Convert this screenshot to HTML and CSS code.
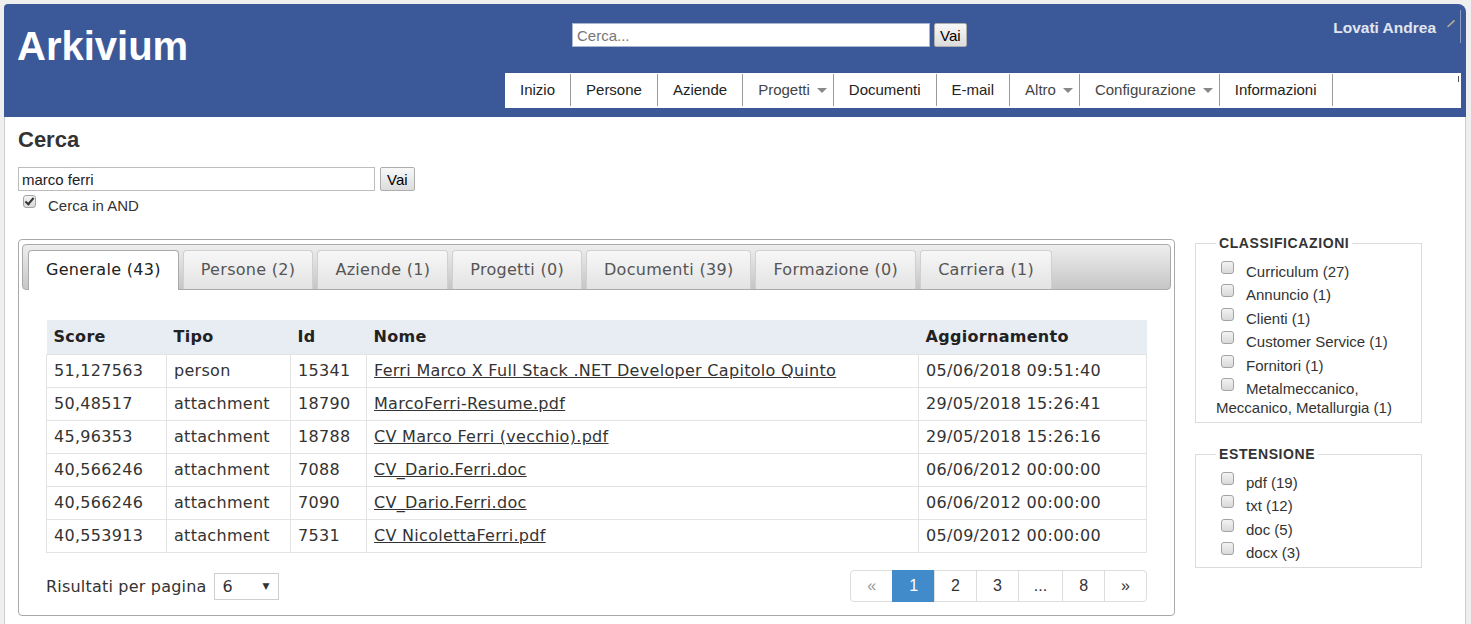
FILE: index.html
```html
<!DOCTYPE html>
<html lang="it">
<head>
<meta charset="utf-8">
<title>Arkivium - Cerca</title>
<link rel="stylesheet" href="styles.css">
</head>
<body>
<div class="page">
  <header class="top">
    <div class="toprow">
      <div class="logo">Arkivium</div>
      <form class="hsearch">
        <input class="hinput" type="text" placeholder="Cerca...">
        <button class="btn" type="button">Vai</button>
      </form>
      <div class="user">
        <span class="uname">Lovati Andrea</span>
        <svg class="uicon" width="8" height="7" viewBox="0 0 8 7"><path d="M1 6.5 L7 0.8" stroke="#b7b08e" stroke-width="1.6" stroke-linecap="round"/></svg>
      </div>
    </div>
    <nav class="menu">
      <a class="mi">Inizio</a>
      <a class="mi">Persone</a>
      <a class="mi">Aziende</a>
      <a class="mi dd">Progetti<span class="caret"></span></a>
      <a class="mi">Documenti</a>
      <a class="mi">E-mail</a>
      <a class="mi dd">Altro<span class="caret"></span></a>
      <a class="mi dd">Configurazione<span class="caret"></span></a>
      <a class="mi">Informazioni</a>
      <span class="mfill"><span class="tick"></span></span>
    </nav>
  </header>

  <main class="content">
    <h1 class="title">Cerca</h1>
    <form class="search">
      <input class="sinput" type="text" value="marco ferri">
      <button class="btn" type="button">Vai</button>
    </form>
    <label class="chk"><input class="cb" type="checkbox" checked>Cerca in AND</label>

    <div class="row">
      <section class="panel">
        <div class="tabbar">
          <div class="tab active">Generale (43)</div>
          <div class="tab">Persone (2)</div>
          <div class="tab">Aziende (1)</div>
          <div class="tab">Progetti (0)</div>
          <div class="tab">Documenti (39)</div>
          <div class="tab">Formazione (0)</div>
          <div class="tab">Carriera (1)</div>
        </div>
        <div class="tabbody">
          <table class="results">
            <thead>
              <tr>
                <th class="c-score">Score</th>
                <th class="c-tipo">Tipo</th>
                <th class="c-id">Id</th>
                <th class="c-nome">Nome</th>
                <th class="c-agg">Aggiornamento</th>
              </tr>
            </thead>
            <tbody>
              <tr><td>51,127563</td><td>person</td><td>15341</td><td><a class="lnk">Ferri Marco X Full Stack .NET Developer Capitolo Quinto</a></td><td>05/06/2018 09:51:40</td></tr>
              <tr><td>50,48517</td><td>attachment</td><td>18790</td><td><a class="lnk">MarcoFerri-Resume.pdf</a></td><td>29/05/2018 15:26:41</td></tr>
              <tr><td>45,96353</td><td>attachment</td><td>18788</td><td><a class="lnk">CV Marco Ferri (vecchio).pdf</a></td><td>29/05/2018 15:26:16</td></tr>
              <tr><td>40,566246</td><td>attachment</td><td>7088</td><td><a class="lnk">CV_Dario.Ferri.doc</a></td><td>06/06/2012 00:00:00</td></tr>
              <tr><td>40,566246</td><td>attachment</td><td>7090</td><td><a class="lnk">CV_Dario.Ferri.doc</a></td><td>06/06/2012 00:00:00</td></tr>
              <tr><td>40,553913</td><td>attachment</td><td>7531</td><td><a class="lnk">CV NicolettaFerri.pdf</a></td><td>05/09/2012 00:00:00</td></tr>
            </tbody>
          </table>
          <div class="foot">
            <div class="perpage">
              <span>Risultati per pagina</span>
              <div class="sel"><span class="selval">6</span><span class="selarrow">▼</span></div>
            </div>
            <ul class="pager">
              <li><a class="pg disabled">«</a></li>
              <li><a class="pg active">1</a></li>
              <li><a class="pg">2</a></li>
              <li><a class="pg">3</a></li>
              <li><a class="pg ell">...</a></li>
              <li><a class="pg">8</a></li>
              <li><a class="pg">»</a></li>
            </ul>
          </div>
        </div>
      </section>

      <aside class="side">
        <fieldset class="facet">
          <legend>CLASSIFICAZIONI</legend>
          <div class="item"><input class="cb" type="checkbox">Curriculum (27)</div>
          <div class="item"><input class="cb" type="checkbox">Annuncio (1)</div>
          <div class="item"><input class="cb" type="checkbox">Clienti (1)</div>
          <div class="item"><input class="cb" type="checkbox">Customer Service (1)</div>
          <div class="item"><input class="cb" type="checkbox">Fornitori (1)</div>
          <div class="item"><input class="cb" type="checkbox">Metalmeccanico, Meccanico, Metallurgia (1)</div>
        </fieldset>
        <fieldset class="facet">
          <legend>ESTENSIONE</legend>
          <div class="item"><input class="cb" type="checkbox">pdf (19)</div>
          <div class="item"><input class="cb" type="checkbox">txt (12)</div>
          <div class="item"><input class="cb" type="checkbox">doc (5)</div>
          <div class="item"><input class="cb" type="checkbox">docx (3)</div>
        </fieldset>
      </aside>
    </div>
  </main>
</div>
</body>
</html>
```

FILE: styles.css
```css
html, body {
  margin: 0;
  padding: 0;
}
body {
  background: #efefef;
  font-family: "Liberation Sans", Arial, sans-serif;
  color: #333;
}
.page {
  margin: 4px 5px 0 4px;
}

/* ---------- header ---------- */
.top {
  background: #3b5998;
  height: 113px;
  box-sizing: border-box;
  border-radius: 4px 8px 0 0;
  display: flex;
  flex-direction: column;
  padding: 0 5px 0 13px;
}
.toprow {
  display: flex;
  align-items: flex-start;
  height: 66px;
}
.logo {
  width: 555px;
  flex: none;
  color: #fff;
  font-weight: bold;
  font-size: 40px;
  line-height: 48px;
  margin-top: 18px;
}
.hsearch {
  display: flex;
  gap: 4px;
  margin: 19px 0 0;
}
.hinput {
  width: 358px;
  height: 24px;
  box-sizing: border-box;
  border: 1px solid #a9b6cf;
  padding: 0 4px;
  font-family: "Liberation Sans", Arial, sans-serif;
  font-size: 15px;
  color: #222;
  outline: none;
}
.hinput::placeholder {
  color: #777;
}
.btn {
  height: 24px;
  box-sizing: border-box;
  padding: 0 6px;
  font-family: "Liberation Sans", Arial, sans-serif;
  font-size: 15px;
  color: #000;
  border: 1px solid #adadad;
  border-radius: 2px;
  background: linear-gradient(#f8f8f8, #dcdcdc);
}
.hsearch .btn {
  padding: 0 5px;
}
.user {
  margin-left: auto;
  margin-top: 6px;
  display: flex;
  align-items: flex-start;
  height: 33px;
  border-right: 1px solid #8d9dc2;
  padding-right: 5px;
}
.uname {
  color: #e1e5f0;
  font-weight: bold;
  font-size: 15.5px;
  line-height: 18px;
  margin-top: 9px;
  white-space: nowrap;
}
.uicon {
  margin: 10px 0 0 11px;
}
.menu {
  margin-top: 3px;
  align-self: flex-end;
  width: 956px;
  height: 35px;
  box-sizing: border-box;
  background: #fff;
  display: flex;
  padding: 1px 0 2px;
}
.mi {
  display: flex;
  align-items: center;
  padding: 0 15px;
  line-height: 32px;
  font-size: 15px;
  color: #222;
  border-right: 1px solid #9a9a9a;
  white-space: nowrap;
}
.mi.dd {
  padding-right: 6px;
  color: #444;
}
.caret {
  display: inline-block;
  width: 0;
  height: 0;
  margin-left: 7px;
  border-left: 5px solid transparent;
  border-right: 5px solid transparent;
  border-top: 5px solid #888;
}
.mfill {
  flex: 1;
  position: relative;
}
.tick {
  position: absolute;
  right: 2px;
  top: 2px;
  width: 1px;
  height: 6px;
  background: #555;
}

/* ---------- content ---------- */
.content {
  background: #fff;
  border-left: 1px solid #cdcdcd;
  border-right: 1px solid #cdcdcd;
  padding: 10px 0 0 13px;
  min-height: 507px;
  box-sizing: border-box;
}
.title {
  margin: 0;
  font-size: 22px;
  line-height: 26px;
  font-weight: bold;
  color: #333;
}
.search {
  display: flex;
  gap: 5px;
  margin: 14px 0 0;
}
.sinput {
  width: 357px;
  height: 24px;
  box-sizing: border-box;
  border: 1px solid #bdbdbd;
  padding: 0 3px;
  font-family: "Liberation Sans", Arial, sans-serif;
  font-size: 15px;
  color: #222;
  outline: none;
}
.chk {
  display: block;
  font-size: 15px;
  line-height: 19px;
  padding-top: 1px;
  color: #333;
}
.cb {
  appearance: none;
  -webkit-appearance: none;
  box-sizing: border-box;
  width: 13px;
  height: 13px;
  margin: 3px 12px 3px 5px;
  border: 1px solid #a3a3a3;
  border-radius: 3px;
  background: linear-gradient(#f3f3f3, #d9d9d9);
  vertical-align: baseline;
  position: relative;
}
.cb:checked::after {
  content: "";
  position: absolute;
  left: 3px;
  top: 0;
  width: 3px;
  height: 7px;
  border: solid #333;
  border-width: 0 2px 2px 0;
  transform: rotate(40deg);
}

.row {
  display: flex;
  align-items: flex-start;
  margin-top: 20px;
}

/* ---------- panel / tabs ---------- */
.panel {
  margin-top: 4px;
  width: 1157px;
  box-sizing: border-box;
  border: 1px solid #aaa;
  border-radius: 4px;
  padding: 4px 3px;
  font-family: "DejaVu Sans", Verdana, sans-serif;
  letter-spacing: 0.3px;
}
.tabbar {
  display: flex;
  align-items: flex-end;
  gap: 4px;
  padding: 5px 5px 0;
  border: 1px solid #aaa;
  border-radius: 4px;
  background: linear-gradient(#eeeeee, #d8d8d8 55%, #c6c6c6);
}
.tab {
  padding: 9px 17px 9px;
  line-height: 20px;
  font-size: 16px;
  color: #555;
  border: 1px solid #d0d0d0;
  border-bottom: 0;
  border-radius: 4px 4px 0 0;
  background: linear-gradient(#f7f7f7, #e3e3e3);
  white-space: nowrap;
}
.tab.active {
  padding-bottom: 10px;
  margin-bottom: -1px;
  background: #fff;
  border-color: #aaa;
  color: #212121;
}
.tabbody {
  padding: 30px 24px 9px;
}
.results {
  width: 1100px;
  table-layout: fixed;
  border-collapse: collapse;
  font-size: 16px;
  color: #333;
}
.results th {
  background: #e8edf3;
  text-align: left;
  font-weight: bold;
  color: #222;
  padding: 6px 7px;
  line-height: 22px;
}
.results td {
  padding: 5px 7px;
  line-height: 22px;
  border: 1px solid #e3e3e3;
  white-space: nowrap;
}
.c-score { width: 106px; }
.c-tipo { width: 110px; }
.c-id { width: 62px; }
.c-nome { width: 538px; }
.c-agg { width: 214px; }
.lnk {
  color: #333;
  text-decoration: underline;
}
.foot {
  display: flex;
  justify-content: space-between;
  align-items: center;
  margin-top: 17px;
}
.perpage {
  display: flex;
  align-items: center;
  font-size: 16px;
  color: #333;
  letter-spacing: 0.2px;
}
.sel {
  margin-left: 7px;
  width: 65px;
  height: 27px;
  box-sizing: border-box;
  border: 1px solid #cfcfcf;
  display: flex;
  align-items: center;
  justify-content: space-between;
  padding: 0 8px 0 8px;
}
.selarrow {
  font-size: 9px;
  color: #333;
}
.pager {
  display: flex;
  list-style: none;
  margin: 0;
  padding: 0;
  font-family: "Liberation Sans", Arial, sans-serif;
  letter-spacing: 0;
}
.pg {
  display: block;
  padding: 5px 16px;
  line-height: 20px;
  font-size: 16px;
  color: #333;
  border: 1px solid #ddd;
  margin-left: -1px;
  background: #fff;
}
.pg.ell {
  padding: 5px 15px;
}
.pager li:first-child .pg {
  margin-left: 0;
  border-radius: 4px 0 0 4px;
}
.pager li:last-child .pg {
  border-radius: 0 4px 4px 0;
}
.pg.disabled {
  color: #999;
}
.pg.active {
  background: #428bca;
  border-color: #428bca;
  color: #fff;
}

/* ---------- sidebar ---------- */
.side {
  margin-left: 20px;
  width: 227px;
}
.facet {
  margin: 0 0 23px;
  padding: 6px 5px 4.5px 20px;
  border: 1px solid #dcdcdc;
  min-width: 0;
}
.facet legend {
  padding: 0 3px;
  font-weight: bold;
  font-size: 14px;
  line-height: 17px;
  letter-spacing: 0.6px;
  color: #333;
}
.item {
  font-size: 15px;
  line-height: 19px;
  padding-bottom: 0.4px;
  color: #333;
}
```
